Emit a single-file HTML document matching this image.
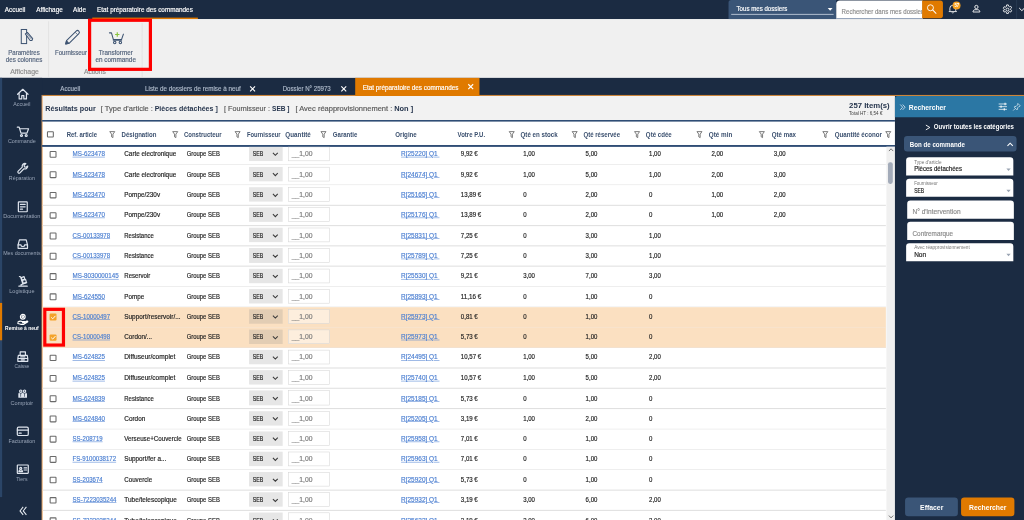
<!DOCTYPE html>
<html lang="fr"><head><meta charset="utf-8"><title>Etat préparatoire des commandes</title>
<style>
html,body{margin:0;padding:0;background:#1b2b42;}
body{width:1024px;height:520px;overflow:hidden;position:relative;font-family:"Liberation Sans",sans-serif;}
#app{position:absolute;left:0;top:0;width:1920px;height:975px;transform:scale(0.5333333);transform-origin:0 0;overflow:hidden;background:#fff;filter:contrast(1);}
#app div,#app svg{position:absolute;box-sizing:border-box;}
#app svg{overflow:visible;}
.t{white-space:nowrap;-webkit-text-stroke:0.3px;}
.t.h{-webkit-text-stroke:0;}
.u{text-decoration:underline;}
</style></head>
<body>
<div id="app">
<div style="left:0px;top:0px;width:1920px;height:36px;background:#1b2b42;"></div>
<div class="t" style="top:12.0px;font-size:12px;line-height:15.6px;color:#fff;transform:scaleX(0.9936);transform-origin:0 50%;left:8.91px;">Accueil</div>
<div class="t" style="top:12.0px;font-size:12px;line-height:15.6px;color:#fff;transform:scaleX(0.9972);transform-origin:0 50%;left:67.5px;">Affichage</div>
<div class="t" style="top:12.0px;font-size:12px;line-height:15.6px;color:#fff;transform:scaleX(1.0145);transform-origin:0 50%;left:137.34px;">Aide</div>
<div class="t" style="top:12.0px;font-size:12px;line-height:15.6px;color:#fff;transform:scaleX(0.9932);transform-origin:0 50%;left:181.88px;">Etat préparatoire des commandes</div>
<div style="left:172.5px;top:32.5px;width:198.75px;height:3.5px;background:#e07a00;"></div>
<div style="left:1366px;top:0px;width:202px;height:36px;background:#3a5577;border-radius:5px 0 0 0;"></div>
<div class="t" style="top:8.6px;font-size:12px;line-height:15.6px;color:#fff;transform:scaleX(0.9576);transform-origin:0 50%;left:1381.41px;">Tous mes dossiers</div>
<div style="left:1371px;top:26px;width:192px;height:1.6px;background:#a9b7ca;"></div>
<svg style="left:1552px;top:14.5px;" width="9" height="5" viewBox="0 0 9 5"><path d="M0 0h9L4.5 5z" fill="#fff"/></svg>
<div style="left:1567.5px;top:1px;width:162px;height:33.5px;background:#fff;border-radius:7px 0 0 0;"></div>
<div style="left:1567.5px;top:33.5px;width:162px;height:2.5px;background:#8fa0b8;"></div>
<div style="left:1567.5px;top:1px;width:161.5px;height:33px;overflow:hidden">
<div class="t" style="top:14.15px;font-size:12px;line-height:15.6px;color:#8c8c8c;transform:scaleX(0.9572);transform-origin:0 50%;left:10.779999999999973px;">Rechercher dans mes dossiers</div>
</div>
<div style="left:1729px;top:1.2px;width:39px;height:33px;background:#e07a00;border-radius:0 5px 5px 0;"></div>
<svg style="left:1735px;top:5px;" width="24" height="24" viewBox="0 0 24 24"><circle cx="9.600" cy="9.600" r="5.600" fill="none" stroke="#fff" stroke-width="1.700"/><path d="M13.700 13.700L20 20" stroke="#fff" stroke-width="1.900" stroke-linecap="round"/></svg>
<svg style="left:1778px;top:7px;" width="17" height="18" viewBox="0 0 17 18"><path d="M3 13.200V8.500a5.500 5.500 0 0 1 11 0v4.700l1.500 1.500h-14z" fill="none" stroke="#fff" stroke-width="1.600" stroke-linejoin="round"/><path d="M6.800 16.200a1.800 1.800 0 0 0 3.400 0" fill="none" stroke="#fff" stroke-width="1.500"/></svg>
<div style="left:1786px;top:3px;width:15px;height:15px;background:#f5a020;border-radius:50%;"></div>
<div class="t b h" style="top:4.95px;font-size:8.5px;line-height:11.1px;color:#fff;font-weight:700;transform:scaleX(0.95);transform-origin:50% 50%;left:1493.5px;width:600px;text-align:center;"><span class="m">57</span></div>
<svg style="left:1822.5px;top:9px;" width="15.5" height="15" viewBox="0 0 18 17"><circle cx="9" cy="4.600" r="3.600" fill="none" stroke="#fff" stroke-width="1.900"/><path d="M1.500 15.500c0-3 2-5 4.500-5h6c2.500 0 4.500 2 4.500 5z" fill="none" stroke="#fff" stroke-width="1.900" stroke-linejoin="round"/></svg>
<svg style="left:1879px;top:8px;" width="20" height="20" viewBox="0 0 20 20"><g fill="none" stroke="#fff" stroke-width="1.6"><circle cx="10" cy="10" r="2.800"/><path d="M8.4 1.200h3.200l.5 2.400 1.800 1 2.300-.8 1.600 2.800-1.800 1.600v2l1.800 1.600-1.600 2.800-2.300-.8-1.800 1-.5 2.400H8.400l-.5-2.400-1.800-1-2.300.8-1.600-2.800L4 11V9L2.200 7.400l1.600-2.800 2.300.8 1.800-1z" stroke-linejoin="round"/></g></svg>
<div style="left:1905.5px;top:0px;width:1.2px;height:36px;background:#33465f;"></div>
<svg style="left:1910px;top:13.5px;" width="11" height="7" viewBox="0 0 11 7"><path d="M1 1l5 5 5-5" fill="none" stroke="#fff" stroke-width="1.8"/></svg>
<div style="left:0px;top:36px;width:1920px;height:110px;background:#f0f0f0;"></div>
<div style="left:90.5px;top:40px;width:1px;height:104px;background:#d6d6d6;"></div>
<div style="left:265.5px;top:40px;width:0;height:104px;border-left:1.5px dotted #c4c4c4"></div>
<svg style="left:38px;top:53px;" width="26" height="31" viewBox="0 0 26 31"><g fill="none" stroke="#3e5472" stroke-width="1.9"><rect x="1.900" y="2.300" width="10" height="26.400"/><path d="M9.500 10.500l3.800-2.700 10 11.500-1.200 3.400-3.600.3z" fill="#f0f0f0" stroke-linejoin="round"/><path d="M11.400 9.200l10 11.500" stroke-width="1.200"/></g></svg>
<div class="t b" style="top:91.8px;font-size:12px;line-height:15.6px;color:#52627b;transform:scaleX(0.9521);transform-origin:50% 50%;left:-255.5px;width:600px;text-align:center;"><span class="m">Paramètres</span></div>
<div class="t b" style="top:105.8px;font-size:12px;line-height:15.6px;color:#52627b;transform:scaleX(0.9678);transform-origin:50% 50%;left:-255.5px;width:600px;text-align:center;"><span class="m">des colonnes</span></div>
<div class="t b" style="top:127.6px;font-size:12px;line-height:15.6px;color:#8d8d8d;transform:scaleX(1.0819);transform-origin:50% 50%;left:-254.3px;width:600px;text-align:center;"><span class="m">Affichage</span></div>
<svg style="left:121px;top:55px;" width="30" height="30" viewBox="0 0 30 30"><g fill="none" stroke="#3e5472" stroke-width="1.900" stroke-linejoin="round"><path d="M2.200 27.500l1.500-6.500L21.800 3.200a3.600 3.600 0 0 1 5 0a3.600 3.600 0 0 1 0 5L9 26z"/><path d="M20 5.500l4.500 4.500" stroke-width="1.300"/><path d="M2.200 27.500l5.800-1.300-4.300-4.400z" fill="#3e5472"/></g></svg>
<div class="t" style="top:91.8px;font-size:12px;line-height:15.6px;color:#52627b;transform:scaleX(0.947);transform-origin:0 50%;left:103.12px;">Fournisseur</div>
<svg style="left:204px;top:58px;" width="30" height="28" viewBox="0 0 30 28"><g fill="none" stroke="#3e5472" stroke-width="2" stroke-linejoin="round" stroke-linecap="round"><path d="M1.200 3.600h3.800l3.600 12.600h15.200L27.400 6"/><path d="M8.600 17.200h15.200" stroke-width="2.600"/><circle cx="11.100" cy="21.600" r="2.300"/><circle cx="21.700" cy="21.600" r="2.300"/></g><path d="M15.900 2.600v8.200M11.800 6.700h8.200" stroke="#8ac53f" stroke-width="2.200" fill="none"/></svg>
<div class="t b" style="top:91.8px;font-size:12px;line-height:15.6px;color:#52627b;transform:scaleX(0.9822);transform-origin:50% 50%;left:-83.5px;width:600px;text-align:center;"><span class="m">Transformer</span></div>
<div class="t b" style="top:105.8px;font-size:12px;line-height:15.6px;color:#52627b;transform:scaleX(0.9986);transform-origin:50% 50%;left:-83.5px;width:600px;text-align:center;"><span class="m">en commande</span></div>
<div class="t b" style="top:127.6px;font-size:12px;line-height:15.6px;color:#8d8d8d;transform:scaleX(1.048);transform-origin:50% 50%;left:-122px;width:600px;text-align:center;"><span class="m">Actions</span></div>
<div style="left:165px;top:34.7px;width:119.5px;height:98.3px;border:6.3px solid #fe0000;"></div>
<div style="left:0px;top:146px;width:1920px;height:34px;background:#1b2b42;"></div>
<div style="left:80px;top:178.3px;width:1840px;height:1.7px;background:#cc853a;"></div>
<div class="t" style="top:159.4px;font-size:12px;line-height:15.6px;color:#aebaca;transform:scaleX(0.9693);transform-origin:0 50%;left:112.5px;">Accueil</div>
<div class="t" style="top:159.4px;font-size:12px;line-height:15.6px;color:#aebaca;transform:scaleX(0.9808);transform-origin:0 50%;left:271.69px;">Liste de dossiers de remise à neuf</div>
<div class="t" style="top:159.4px;font-size:12px;line-height:15.6px;color:#aebaca;transform:scaleX(0.9576);transform-origin:0 50%;left:530.44px;">Dossier N° 25973</div>
<svg style="left:469.02px;top:161.8px;" width="9.2" height="9.2" viewBox="0 0 9.2 9.2"><path d="M0 0L9.2 9.2M9.2 0L0 9.2" stroke="#fff" stroke-width="2.1" fill="none"/></svg>
<svg style="left:640.02px;top:161.8px;" width="9.2" height="9.2" viewBox="0 0 9.2 9.2"><path d="M0 0L9.2 9.2M9.2 0L0 9.2" stroke="#fff" stroke-width="2.1" fill="none"/></svg>
<div style="left:666.38px;top:146px;width:232.88px;height:33.5px;background:#e07a00;"></div>
<div class="t" style="top:156.7px;font-size:12px;line-height:15.6px;color:#fff;transform:scaleX(0.9932);transform-origin:0 50%;left:680.44px;">Etat préparatoire des commandes</div>
<svg style="left:878.34px;top:158.4px;" width="9.2" height="9.2" viewBox="0 0 9.2 9.2"><path d="M0 0L9.2 9.2M9.2 0L0 9.2" stroke="#fff" stroke-width="2.1" fill="none"/></svg>
<div style="left:0px;top:146px;width:79px;height:829px;background:#1b2b42;"></div>
<div style="left:0px;top:146px;width:3.5px;height:785.5px;background:#2b4567;"></div>
<div style="left:0px;top:568px;width:3.6px;height:70px;background:#e07a00;"></div>
<svg style="left:30.549999999999997px;top:164.95px;" width="23.5" height="23.5" viewBox="0 0 24 24"><g fill="none" stroke="#dfe5ee" stroke-width="2.3" stroke-linejoin="round" stroke-linecap="round"><path d="M2 12L12 2.500 22 12M5 10v11h5v-6.500h4V21h5V10" /></g></svg>
<div class="t b h" style="top:187.9px;font-size:10.3px;line-height:13.4px;color:#99a5b8;transform:scaleX(0.9656);transform-origin:50% 50%;left:-259px;width:600px;text-align:center;"><span class="m">Accueil</span></div>
<svg style="left:30.549999999999997px;top:235.20999999999998px;" width="23.5" height="23.5" viewBox="0 0 24 24"><g fill="none" stroke="#dfe5ee" stroke-width="2.3" stroke-linejoin="round" stroke-linecap="round"><path d="M1.500 3.500h3.500l3.500 11.500h11.500l3-8.500h-16.500"/><circle cx="9.500" cy="19.500" r="1.900"/><circle cx="18.500" cy="19.500" r="1.900"/></g></svg>
<div class="t b h" style="top:258.16px;font-size:10.3px;line-height:13.4px;color:#99a5b8;transform:scaleX(0.9826);transform-origin:50% 50%;left:-259px;width:600px;text-align:center;"><span class="m">Commande</span></div>
<svg style="left:30.549999999999997px;top:305.47px;" width="23.5" height="23.5" viewBox="0 0 24 24"><g fill="none" stroke="#dfe5ee" stroke-width="2.3" stroke-linejoin="round" stroke-linecap="round"><path d="M21.500 6.500a5.500 5.500 0 0 1-7.300 5.200L6.500 19.500a2.300 2.300 0 0 1-3.300-3.300L11 8.500a5.500 5.500 0 0 1 6.800-6.800l-3.300 3.300.7 3 3 .7z"/></g></svg>
<div class="t b h" style="top:328.42px;font-size:10.3px;line-height:13.4px;color:#99a5b8;transform:scaleX(0.9677);transform-origin:50% 50%;left:-259px;width:600px;text-align:center;"><span class="m">Réparation</span></div>
<svg style="left:30.549999999999997px;top:375.73px;" width="23.5" height="23.5" viewBox="0 0 24 24"><g fill="none" stroke="#dfe5ee" stroke-width="2.3" stroke-linejoin="round" stroke-linecap="round"><rect x="3.500" y="2.500" width="17" height="19" rx="1"/><path d="M7.500 7.500h9M7.500 12h9M7.500 16.500h4"/></g></svg>
<div class="t b h" style="top:398.68px;font-size:10.3px;line-height:13.4px;color:#99a5b8;transform:scaleX(1.0042);transform-origin:50% 50%;left:-259px;width:600px;text-align:center;"><span class="m">Documentation</span></div>
<svg style="left:30.549999999999997px;top:445.99px;" width="23.5" height="23.5" viewBox="0 0 24 24"><g fill="none" stroke="#dfe5ee" stroke-width="2.3" stroke-linejoin="round" stroke-linecap="round"><path d="M3 13.500l2.500-9.500h13l2.500 9.500v6.500h-18z"/><path d="M3 13.500h5.500c0 2 1.500 3 3.500 3s3.500-1 3.500-3H21"/></g></svg>
<div class="t b h" style="top:468.94px;font-size:10.3px;line-height:13.4px;color:#99a5b8;transform:scaleX(0.9647);transform-origin:50% 50%;left:-259px;width:600px;text-align:center;"><span class="m">Mes documents</span></div>
<svg style="left:30.549999999999997px;top:516.25px;" width="23.5" height="23.5" viewBox="0 0 24 24"><g fill="none" stroke="#dfe5ee" stroke-width="2.3" stroke-linejoin="round" stroke-linecap="round"><path d="M5.500 2.500l2.300.800 4.200 13.200"/><rect x="9.800" y="3.500" width="5.500" height="5" transform="rotate(-17 12.500 6)"/><rect x="11.800" y="9" width="6.500" height="5.800" transform="rotate(-17 15 12)"/><path d="M4.500 21h16M8.500 18.500l4-2 7-2"/></g></svg>
<div class="t b h" style="top:539.2px;font-size:10.3px;line-height:13.4px;color:#99a5b8;transform:scaleX(1.0063);transform-origin:50% 50%;left:-259px;width:600px;text-align:center;"><span class="m">Logistique</span></div>
<svg style="left:30.549999999999997px;top:586.51px;" width="23.5" height="23.5" viewBox="0 0 24 24"><g fill="none" stroke="#fff" stroke-width="2.3" stroke-linejoin="round" stroke-linecap="round"><circle cx="12" cy="7" r="4.500"/><circle cx="12" cy="7" r="1.500"/><path d="M2.500 17.500c3-2.500 6-2.500 9-1h4c1.500 0 1.500 2 0 2h-4M15 17.500l5-2c1.500-.5 2 1 1 1.800l-7 4.200H8l-5.500-1.500"/></g></svg>
<div class="t b h" style="top:609.46px;font-size:10.3px;line-height:13.4px;color:#fff;font-weight:700;transform:scaleX(0.9022);transform-origin:50% 50%;left:-259px;width:600px;text-align:center;"><span class="m">Remise à neuf</span></div>
<svg style="left:30.549999999999997px;top:656.77px;" width="23.5" height="23.5" viewBox="0 0 24 24"><g fill="none" stroke="#dfe5ee" stroke-width="2.3" stroke-linejoin="round" stroke-linecap="round"><path d="M7 9V3h10v6M3.500 9.500h17l1 6h-19zM2.500 15.500h19v5.500h-19zM8 12.500h8M9 18h6"/></g></svg>
<div class="t b h" style="top:679.72px;font-size:10.3px;line-height:13.4px;color:#99a5b8;transform:scaleX(0.8884);transform-origin:50% 50%;left:-259px;width:600px;text-align:center;"><span class="m">Caisse</span></div>
<svg style="left:32.8px;top:729.28px;" width="19" height="19" viewBox="0 0 24 24"><g fill="none" stroke="#dfe5ee" stroke-width="2.6" stroke-linejoin="round" stroke-linecap="round"><circle cx="7.500" cy="5.500" r="2.800"/><circle cx="16.500" cy="5.500" r="2.800"/><path d="M3 20v-7.500c0-2 1.500-3 4.500-3s4.500 1 4.500 3V20zM12 20v-7.500c0-2 1.500-3 4.500-3s4.500 1 4.500 3V20zM5.500 13v7M9.500 13v7M14.500 13v7M18.500 13v7"/></g></svg>
<div class="t b h" style="top:749.98px;font-size:10.3px;line-height:13.4px;color:#99a5b8;transform:scaleX(1.0174);transform-origin:50% 50%;left:-259px;width:600px;text-align:center;"><span class="m">Comptoir</span></div>
<svg style="left:30.549999999999997px;top:797.29px;" width="23.5" height="23.5" viewBox="0 0 24 24"><g fill="none" stroke="#dfe5ee" stroke-width="2.3" stroke-linejoin="round" stroke-linecap="round"><rect x="1.500" y="4" width="21" height="16" rx="2.500"/><path d="M1.500 9.500h21M5 15.500h4"/></g></svg>
<div class="t b h" style="top:820.24px;font-size:10.3px;line-height:13.4px;color:#99a5b8;transform:scaleX(0.9805);transform-origin:50% 50%;left:-259px;width:600px;text-align:center;"><span class="m">Facturation</span></div>
<svg style="left:30.549999999999997px;top:867.55px;" width="23.5" height="23.5" viewBox="0 0 24 24"><g fill="none" stroke="#dfe5ee" stroke-width="2.3" stroke-linejoin="round" stroke-linecap="round"><rect x="1.500" y="4" width="21" height="16" rx="1"/><circle cx="8" cy="10.500" r="2"/><path d="M4.500 16.500c0-2 1.500-3 3.500-3s3.500 1 3.500 3zM14.500 9.500h5M14.500 13.500h5"/></g></svg>
<div class="t b h" style="top:890.5px;font-size:10.3px;line-height:13.4px;color:#99a5b8;transform:scaleX(0.9342);transform-origin:50% 50%;left:-259px;width:600px;text-align:center;"><span class="m">Tiers</span></div>
<svg style="left:35.5px;top:948.5px;" width="15" height="18" viewBox="0 0 15 18"><path d="M7.500 1.500L1.500 9l6 7.500M13.500 1.500L7.500 9l6 7.500" fill="none" stroke="#e8edf3" stroke-width="1.900"/></svg>
<div style="left:78.6px;top:180px;width:1599.4px;height:795px;background:#fff;"></div>
<div style="left:78.6px;top:180px;width:1599.4px;height:45.5px;background:#f2f2f2;"></div>
<div style="left:78.19999999999999px;top:178.3px;width:2px;height:797px;background:#e6a86a;"></div>
<div style="left:78.6px;top:225.2px;width:1599.4px;height:3.2px;background:#2f4d75;"></div>
<div class="t h" style="top:194.3px;font-size:14px;line-height:18.2px;color:#26354d;font-weight:700;transform:scaleX(0.9641);transform-origin:0 50%;left:84.84px;">Résultats pour</div>
<div class="t" style="top:194.3px;font-size:14px;line-height:18.2px;color:#585858;transform:scaleX(1.0034);transform-origin:0 50%;left:189.38px;">[ Type d'article : </div>
<div class="t h" style="top:194.3px;font-size:14px;line-height:18.2px;color:#26354d;font-weight:700;transform:scaleX(0.9442);transform-origin:0 50%;left:290.44px;">Pièces détachées ]</div>
<div class="t" style="top:194.3px;font-size:14px;line-height:18.2px;color:#585858;transform:scaleX(0.9628);transform-origin:0 50%;left:420.47px;">[ Fournisseur : </div>
<div class="t h" style="top:194.3px;font-size:14px;line-height:18.2px;color:#26354d;font-weight:700;transform:scaleX(0.8786);transform-origin:0 50%;left:510.0px;">SEB ]</div>
<div class="t" style="top:194.3px;font-size:14px;line-height:18.2px;color:#585858;transform:scaleX(1.0067);transform-origin:0 50%;left:553.88px;">[ Avec réapprovisionnement : </div>
<div class="t h" style="top:194.3px;font-size:14px;line-height:18.2px;color:#26354d;font-weight:700;transform:scaleX(0.9959);transform-origin:0 50%;left:738.75px;">Non ]</div>
<div class="t h" style="top:189.3px;font-size:14.3px;line-height:18.6px;color:#26354d;font-weight:700;transform:scaleX(1.019);transform-origin:0 50%;left:1591.69px;">257 Item(s)</div>
<div class="t h" style="top:205.95px;font-size:9.3px;line-height:12.1px;color:#3c3c3c;transform:scaleX(0.9202);transform-origin:0 50%;left:1592.34px;">Total HT : 6,54 €</div>
<div style="left:87.94px;top:245.81px;width:13.5px;height:12.7px;background:#fff;border:2.100px solid #6a6a6a;border-radius:2px;"></div>
<div class="t h" style="top:244.6px;font-size:12px;line-height:15.6px;color:#3a4f6e;font-weight:700;transform:scaleX(0.9275);transform-origin:0 50%;left:125.44px;">Ref. article</div>
<div class="t h" style="top:244.6px;font-size:12px;line-height:15.6px;color:#3a4f6e;font-weight:700;transform:scaleX(0.9489);transform-origin:0 50%;left:227.81px;">Désignation</div>
<div class="t h" style="top:244.6px;font-size:12px;line-height:15.6px;color:#3a4f6e;font-weight:700;transform:scaleX(0.9332);transform-origin:0 50%;left:345.0px;">Constructeur</div>
<div class="t h" style="top:244.6px;font-size:12px;line-height:15.6px;color:#3a4f6e;font-weight:700;transform:scaleX(0.9056);transform-origin:0 50%;left:462.66px;">Fournisseur</div>
<div class="t h" style="top:244.6px;font-size:12px;line-height:15.6px;color:#3a4f6e;font-weight:700;transform:scaleX(0.9823);transform-origin:0 50%;left:534.84px;">Quantité</div>
<div class="t h" style="top:244.6px;font-size:12px;line-height:15.6px;color:#3a4f6e;font-weight:700;transform:scaleX(0.9473);transform-origin:0 50%;left:624.19px;">Garantie</div>
<div class="t h" style="top:244.6px;font-size:12px;line-height:15.6px;color:#3a4f6e;font-weight:700;transform:scaleX(0.9639);transform-origin:0 50%;left:741.38px;">Origine</div>
<div class="t h" style="top:244.6px;font-size:12px;line-height:15.6px;color:#3a4f6e;font-weight:700;transform:scaleX(0.9388);transform-origin:0 50%;left:858.38px;">Votre P.U.</div>
<div class="t h" style="top:244.6px;font-size:12px;line-height:15.6px;color:#3a4f6e;font-weight:700;transform:scaleX(0.9657);transform-origin:0 50%;left:975.94px;">Qté en stock</div>
<div class="t h" style="top:244.6px;font-size:12px;line-height:15.6px;color:#3a4f6e;font-weight:700;transform:scaleX(0.9434);transform-origin:0 50%;left:1093.88px;">Qté réservée</div>
<div class="t h" style="top:244.6px;font-size:12px;line-height:15.6px;color:#3a4f6e;font-weight:700;transform:scaleX(0.956);transform-origin:0 50%;left:1211.25px;">Qté cdée</div>
<div class="t h" style="top:244.6px;font-size:12px;line-height:15.6px;color:#3a4f6e;font-weight:700;transform:scaleX(0.9863);transform-origin:0 50%;left:1329.38px;">Qté min</div>
<div class="t h" style="top:244.6px;font-size:12px;line-height:15.6px;color:#3a4f6e;font-weight:700;transform:scaleX(0.9601);transform-origin:0 50%;left:1446.56px;">Qté max</div>
<div class="t h" style="top:244.6px;font-size:12px;line-height:15.6px;color:#3a4f6e;font-weight:700;transform:scaleX(0.9628);transform-origin:0 50%;left:1564.69px;">Quantité éconor</div>
<svg style="left:204.88px;top:245.9px;" width="11" height="13" viewBox="0 0 11 13"><path d="M0.800 0.800h9.400L6.800 5.500v6.500l-2.600-1.500v-5z" fill="none" stroke="#5c5c5c" stroke-width="1.500" stroke-linejoin="round"/></svg>
<svg style="left:322.62px;top:245.9px;" width="11" height="13" viewBox="0 0 11 13"><path d="M0.800 0.800h9.400L6.800 5.500v6.500l-2.600-1.500v-5z" fill="none" stroke="#5c5c5c" stroke-width="1.500" stroke-linejoin="round"/></svg>
<svg style="left:440.0px;top:245.9px;" width="11" height="13" viewBox="0 0 11 13"><path d="M0.800 0.800h9.400L6.800 5.500v6.500l-2.600-1.500v-5z" fill="none" stroke="#5c5c5c" stroke-width="1.500" stroke-linejoin="round"/></svg>
<svg style="left:600.5px;top:245.9px;" width="11" height="13" viewBox="0 0 11 13"><path d="M0.800 0.800h9.400L6.800 5.500v6.500l-2.600-1.500v-5z" fill="none" stroke="#5c5c5c" stroke-width="1.500" stroke-linejoin="round"/></svg>
<svg style="left:953.75px;top:245.9px;" width="11" height="13" viewBox="0 0 11 13"><path d="M0.800 0.800h9.400L6.800 5.500v6.500l-2.600-1.500v-5z" fill="none" stroke="#5c5c5c" stroke-width="1.500" stroke-linejoin="round"/></svg>
<svg style="left:1071.5px;top:245.9px;" width="11" height="13" viewBox="0 0 11 13"><path d="M0.800 0.800h9.400L6.800 5.500v6.500l-2.600-1.500v-5z" fill="none" stroke="#5c5c5c" stroke-width="1.500" stroke-linejoin="round"/></svg>
<svg style="left:1188.88px;top:245.9px;" width="11" height="13" viewBox="0 0 11 13"><path d="M0.800 0.800h9.400L6.800 5.500v6.500l-2.600-1.500v-5z" fill="none" stroke="#5c5c5c" stroke-width="1.500" stroke-linejoin="round"/></svg>
<svg style="left:1306.06px;top:245.9px;" width="11" height="13" viewBox="0 0 11 13"><path d="M0.800 0.800h9.400L6.800 5.500v6.500l-2.600-1.500v-5z" fill="none" stroke="#5c5c5c" stroke-width="1.500" stroke-linejoin="round"/></svg>
<svg style="left:1423.25px;top:245.9px;" width="11" height="13" viewBox="0 0 11 13"><path d="M0.800 0.800h9.400L6.800 5.500v6.500l-2.600-1.500v-5z" fill="none" stroke="#5c5c5c" stroke-width="1.500" stroke-linejoin="round"/></svg>
<svg style="left:1542.12px;top:245.9px;" width="11" height="13" viewBox="0 0 11 13"><path d="M0.800 0.800h9.400L6.800 5.500v6.500l-2.600-1.500v-5z" fill="none" stroke="#5c5c5c" stroke-width="1.500" stroke-linejoin="round"/></svg>
<svg style="left:1659.5px;top:245.9px;" width="11" height="13" viewBox="0 0 11 13"><path d="M0.800 0.800h9.400L6.800 5.500v6.500l-2.600-1.500v-5z" fill="none" stroke="#5c5c5c" stroke-width="1.500" stroke-linejoin="round"/></svg>
<div style="left:78.6px;top:271.8px;width:1599.4px;height:3.2px;background:#2f4d75;"></div>
<div style="left:79.6px;top:307.73999999999995px;width:1581.9px;height:1.6px;background:#e0e0e0;"></div>
<div style="left:92.62px;top:283.29999999999995px;width:13.5px;height:12.7px;background:#fff;border:2.100px solid #6a6a6a;border-radius:2px;"></div>
<div class="t" style="top:282.0px;font-size:12px;line-height:15.6px;color:#4b7fd1;transform:scaleX(0.9793);transform-origin:0 50%;left:135.94px;text-decoration:underline;">MS-623478</div>
<div class="t" style="top:282.0px;font-size:12px;line-height:15.6px;color:#222;transform:scaleX(0.9934);transform-origin:0 50%;left:232.5px;">Carte electronique</div>
<div class="t" style="top:282.0px;font-size:12px;line-height:15.6px;color:#222;transform:scaleX(0.9226);transform-origin:0 50%;left:350.16px;">Groupe SEB</div>
<div style="left:467.34px;top:274.7px;width:62.2px;height:27.2px;background:#e6e6e6;"></div>
<div class="t" style="top:282.0px;font-size:12px;line-height:15.6px;color:#222;transform:scaleX(0.8199);transform-origin:0 50%;left:473.91px;">SEB</div>
<svg style="left:510.75px;top:286.29999999999995px;" width="10.5" height="6.5" viewBox="0 0 10.5 6.5"><path d="M0.700 0.700l4.550 4.600 4.550-4.600" fill="none" stroke="#3a3a3a" stroke-width="2"/></svg>
<div style="left:540.0px;top:274.7px;width:77.8px;height:27.2px;background:#fff;border:1.200px solid #d4d4d4;"></div>
<div class="t" style="top:282.0px;font-size:12px;line-height:15.6px;color:#7c7c7c;transform:scaleX(1.0626);transform-origin:0 50%;left:546.75px;">__1,00</div>
<div class="t" style="top:282.0px;font-size:12px;line-height:15.6px;color:#4b7fd1;transform:scaleX(1.0085);transform-origin:0 50%;left:751.88px;text-decoration:underline;">R[25220] Q1&nbsp;</div>
<div class="t" style="top:282.0px;font-size:12px;line-height:15.6px;color:#222;transform:scaleX(0.9519);transform-origin:0 50%;left:864.19px;">9,92 €</div>
<div class="t" style="top:282.0px;font-size:12px;line-height:15.6px;color:#222;transform:scaleX(0.9422);transform-origin:0 50%;left:981.38px;">1,00</div>
<div class="t" style="top:282.0px;font-size:12px;line-height:15.6px;color:#222;transform:scaleX(0.9422);transform-origin:0 50%;left:1098.38px;">5,00</div>
<div class="t" style="top:282.0px;font-size:12px;line-height:15.6px;color:#222;transform:scaleX(0.9422);transform-origin:0 50%;left:1216.5px;">1,00</div>
<div class="t" style="top:282.0px;font-size:12px;line-height:15.6px;color:#222;transform:scaleX(0.9422);transform-origin:0 50%;left:1333.69px;">2,00</div>
<div class="t" style="top:282.0px;font-size:12px;line-height:15.6px;color:#222;transform:scaleX(0.9422);transform-origin:0 50%;left:1451.25px;">3,00</div>
<div style="left:79.6px;top:345.87999999999994px;width:1581.9px;height:1.6px;background:#e0e0e0;"></div>
<div style="left:92.62px;top:321.43999999999994px;width:13.5px;height:12.7px;background:#fff;border:2.100px solid #6a6a6a;border-radius:2px;"></div>
<div class="t" style="top:320.14px;font-size:12px;line-height:15.6px;color:#4b7fd1;transform:scaleX(0.9793);transform-origin:0 50%;left:135.94px;text-decoration:underline;">MS-623478</div>
<div class="t" style="top:320.14px;font-size:12px;line-height:15.6px;color:#222;transform:scaleX(0.9934);transform-origin:0 50%;left:232.5px;">Carte electronique</div>
<div class="t" style="top:320.14px;font-size:12px;line-height:15.6px;color:#222;transform:scaleX(0.9226);transform-origin:0 50%;left:350.16px;">Groupe SEB</div>
<div style="left:467.34px;top:312.84px;width:62.2px;height:27.2px;background:#e6e6e6;"></div>
<div class="t" style="top:320.14px;font-size:12px;line-height:15.6px;color:#222;transform:scaleX(0.8199);transform-origin:0 50%;left:473.91px;">SEB</div>
<svg style="left:510.75px;top:324.43999999999994px;" width="10.5" height="6.5" viewBox="0 0 10.5 6.5"><path d="M0.700 0.700l4.550 4.600 4.550-4.600" fill="none" stroke="#3a3a3a" stroke-width="2"/></svg>
<div style="left:540.0px;top:312.84px;width:77.8px;height:27.2px;background:#fff;border:1.200px solid #d4d4d4;"></div>
<div class="t" style="top:320.14px;font-size:12px;line-height:15.6px;color:#7c7c7c;transform:scaleX(1.0626);transform-origin:0 50%;left:546.75px;">__1,00</div>
<div class="t" style="top:320.14px;font-size:12px;line-height:15.6px;color:#4b7fd1;transform:scaleX(1.0085);transform-origin:0 50%;left:751.88px;text-decoration:underline;">R[24674] Q1&nbsp;</div>
<div class="t" style="top:320.14px;font-size:12px;line-height:15.6px;color:#222;transform:scaleX(0.9519);transform-origin:0 50%;left:864.19px;">9,92 €</div>
<div class="t" style="top:320.14px;font-size:12px;line-height:15.6px;color:#222;transform:scaleX(0.9422);transform-origin:0 50%;left:981.38px;">1,00</div>
<div class="t" style="top:320.14px;font-size:12px;line-height:15.6px;color:#222;transform:scaleX(0.9422);transform-origin:0 50%;left:1098.38px;">5,00</div>
<div class="t" style="top:320.14px;font-size:12px;line-height:15.6px;color:#222;transform:scaleX(0.9422);transform-origin:0 50%;left:1216.5px;">1,00</div>
<div class="t" style="top:320.14px;font-size:12px;line-height:15.6px;color:#222;transform:scaleX(0.9422);transform-origin:0 50%;left:1333.69px;">2,00</div>
<div class="t" style="top:320.14px;font-size:12px;line-height:15.6px;color:#222;transform:scaleX(0.9422);transform-origin:0 50%;left:1451.25px;">3,00</div>
<div style="left:79.6px;top:384.0199999999999px;width:1581.9px;height:1.6px;background:#e0e0e0;"></div>
<div style="left:92.62px;top:359.5799999999999px;width:13.5px;height:12.7px;background:#fff;border:2.100px solid #6a6a6a;border-radius:2px;"></div>
<div class="t" style="top:358.28px;font-size:12px;line-height:15.6px;color:#4b7fd1;transform:scaleX(0.9793);transform-origin:0 50%;left:135.94px;text-decoration:underline;">MS-623470</div>
<div class="t" style="top:358.28px;font-size:12px;line-height:15.6px;color:#222;transform:scaleX(0.9975);transform-origin:0 50%;left:232.5px;">Pompe/230v</div>
<div class="t" style="top:358.28px;font-size:12px;line-height:15.6px;color:#222;transform:scaleX(0.9226);transform-origin:0 50%;left:350.16px;">Groupe SEB</div>
<div style="left:467.34px;top:350.97999999999996px;width:62.2px;height:27.2px;background:#e6e6e6;"></div>
<div class="t" style="top:358.28px;font-size:12px;line-height:15.6px;color:#222;transform:scaleX(0.8199);transform-origin:0 50%;left:473.91px;">SEB</div>
<svg style="left:510.75px;top:362.5799999999999px;" width="10.5" height="6.5" viewBox="0 0 10.5 6.5"><path d="M0.700 0.700l4.550 4.600 4.550-4.600" fill="none" stroke="#3a3a3a" stroke-width="2"/></svg>
<div style="left:540.0px;top:350.97999999999996px;width:77.8px;height:27.2px;background:#fff;border:1.200px solid #d4d4d4;"></div>
<div class="t" style="top:358.28px;font-size:12px;line-height:15.6px;color:#7c7c7c;transform:scaleX(1.0626);transform-origin:0 50%;left:546.75px;">__1,00</div>
<div class="t" style="top:358.28px;font-size:12px;line-height:15.6px;color:#4b7fd1;transform:scaleX(1.0085);transform-origin:0 50%;left:751.88px;text-decoration:underline;">R[25165] Q1&nbsp;</div>
<div class="t" style="top:358.28px;font-size:12px;line-height:15.6px;color:#222;transform:scaleX(0.9549);transform-origin:0 50%;left:864.19px;">13,89 €</div>
<div class="t" style="top:358.28px;font-size:12px;line-height:15.6px;color:#222;transform:scaleX(0.95);transform-origin:0 50%;left:981.38px;">0</div>
<div class="t" style="top:358.28px;font-size:12px;line-height:15.6px;color:#222;transform:scaleX(0.9422);transform-origin:0 50%;left:1098.38px;">2,00</div>
<div class="t" style="top:358.28px;font-size:12px;line-height:15.6px;color:#222;transform:scaleX(0.95);transform-origin:0 50%;left:1216.5px;">0</div>
<div class="t" style="top:358.28px;font-size:12px;line-height:15.6px;color:#222;transform:scaleX(0.9422);transform-origin:0 50%;left:1333.69px;">1,00</div>
<div class="t" style="top:358.28px;font-size:12px;line-height:15.6px;color:#222;transform:scaleX(0.9422);transform-origin:0 50%;left:1451.25px;">2,00</div>
<div style="left:79.6px;top:422.15999999999997px;width:1581.9px;height:1.6px;background:#e0e0e0;"></div>
<div style="left:92.62px;top:397.71999999999997px;width:13.5px;height:12.7px;background:#fff;border:2.100px solid #6a6a6a;border-radius:2px;"></div>
<div class="t" style="top:396.42px;font-size:12px;line-height:15.6px;color:#4b7fd1;transform:scaleX(0.9793);transform-origin:0 50%;left:135.94px;text-decoration:underline;">MS-623470</div>
<div class="t" style="top:396.42px;font-size:12px;line-height:15.6px;color:#222;transform:scaleX(0.9975);transform-origin:0 50%;left:232.5px;">Pompe/230v</div>
<div class="t" style="top:396.42px;font-size:12px;line-height:15.6px;color:#222;transform:scaleX(0.9226);transform-origin:0 50%;left:350.16px;">Groupe SEB</div>
<div style="left:467.34px;top:389.12px;width:62.2px;height:27.2px;background:#e6e6e6;"></div>
<div class="t" style="top:396.42px;font-size:12px;line-height:15.6px;color:#222;transform:scaleX(0.8199);transform-origin:0 50%;left:473.91px;">SEB</div>
<svg style="left:510.75px;top:400.71999999999997px;" width="10.5" height="6.5" viewBox="0 0 10.5 6.5"><path d="M0.700 0.700l4.550 4.600 4.550-4.600" fill="none" stroke="#3a3a3a" stroke-width="2"/></svg>
<div style="left:540.0px;top:389.12px;width:77.8px;height:27.2px;background:#fff;border:1.200px solid #d4d4d4;"></div>
<div class="t" style="top:396.42px;font-size:12px;line-height:15.6px;color:#7c7c7c;transform:scaleX(1.0626);transform-origin:0 50%;left:546.75px;">__1,00</div>
<div class="t" style="top:396.42px;font-size:12px;line-height:15.6px;color:#4b7fd1;transform:scaleX(1.0085);transform-origin:0 50%;left:751.88px;text-decoration:underline;">R[25176] Q1&nbsp;</div>
<div class="t" style="top:396.42px;font-size:12px;line-height:15.6px;color:#222;transform:scaleX(0.9549);transform-origin:0 50%;left:864.19px;">13,89 €</div>
<div class="t" style="top:396.42px;font-size:12px;line-height:15.6px;color:#222;transform:scaleX(0.95);transform-origin:0 50%;left:981.38px;">0</div>
<div class="t" style="top:396.42px;font-size:12px;line-height:15.6px;color:#222;transform:scaleX(0.9422);transform-origin:0 50%;left:1098.38px;">2,00</div>
<div class="t" style="top:396.42px;font-size:12px;line-height:15.6px;color:#222;transform:scaleX(0.95);transform-origin:0 50%;left:1216.5px;">0</div>
<div class="t" style="top:396.42px;font-size:12px;line-height:15.6px;color:#222;transform:scaleX(0.9422);transform-origin:0 50%;left:1333.69px;">1,00</div>
<div class="t" style="top:396.42px;font-size:12px;line-height:15.6px;color:#222;transform:scaleX(0.9422);transform-origin:0 50%;left:1451.25px;">2,00</div>
<div style="left:79.6px;top:460.29999999999995px;width:1581.9px;height:1.6px;background:#e0e0e0;"></div>
<div style="left:92.62px;top:435.85999999999996px;width:13.5px;height:12.7px;background:#fff;border:2.100px solid #6a6a6a;border-radius:2px;"></div>
<div class="t" style="top:434.56px;font-size:12px;line-height:15.6px;color:#4b7fd1;transform:scaleX(0.9499);transform-origin:0 50%;left:135.94px;text-decoration:underline;">CS-00133978</div>
<div class="t" style="top:434.56px;font-size:12px;line-height:15.6px;color:#222;transform:scaleX(0.9317);transform-origin:0 50%;left:232.5px;">Resistance</div>
<div class="t" style="top:434.56px;font-size:12px;line-height:15.6px;color:#222;transform:scaleX(0.9226);transform-origin:0 50%;left:350.16px;">Groupe SEB</div>
<div style="left:467.34px;top:427.26px;width:62.2px;height:27.2px;background:#e6e6e6;"></div>
<div class="t" style="top:434.56px;font-size:12px;line-height:15.6px;color:#222;transform:scaleX(0.8199);transform-origin:0 50%;left:473.91px;">SEB</div>
<svg style="left:510.75px;top:438.85999999999996px;" width="10.5" height="6.5" viewBox="0 0 10.5 6.5"><path d="M0.700 0.700l4.550 4.600 4.550-4.600" fill="none" stroke="#3a3a3a" stroke-width="2"/></svg>
<div style="left:540.0px;top:427.26px;width:77.8px;height:27.2px;background:#fff;border:1.200px solid #d4d4d4;"></div>
<div class="t" style="top:434.56px;font-size:12px;line-height:15.6px;color:#7c7c7c;transform:scaleX(1.0626);transform-origin:0 50%;left:546.75px;">__1,00</div>
<div class="t" style="top:434.56px;font-size:12px;line-height:15.6px;color:#4b7fd1;transform:scaleX(1.0085);transform-origin:0 50%;left:751.88px;text-decoration:underline;">R[25831] Q1&nbsp;</div>
<div class="t" style="top:434.56px;font-size:12px;line-height:15.6px;color:#222;transform:scaleX(0.9519);transform-origin:0 50%;left:864.19px;">7,25 €</div>
<div class="t" style="top:434.56px;font-size:12px;line-height:15.6px;color:#222;transform:scaleX(0.95);transform-origin:0 50%;left:981.38px;">0</div>
<div class="t" style="top:434.56px;font-size:12px;line-height:15.6px;color:#222;transform:scaleX(0.9422);transform-origin:0 50%;left:1098.38px;">3,00</div>
<div class="t" style="top:434.56px;font-size:12px;line-height:15.6px;color:#222;transform:scaleX(0.9422);transform-origin:0 50%;left:1216.5px;">1,00</div>
<div style="left:79.6px;top:498.43999999999994px;width:1581.9px;height:1.6px;background:#e0e0e0;"></div>
<div style="left:92.62px;top:473.99999999999994px;width:13.5px;height:12.7px;background:#fff;border:2.100px solid #6a6a6a;border-radius:2px;"></div>
<div class="t" style="top:472.7px;font-size:12px;line-height:15.6px;color:#4b7fd1;transform:scaleX(0.9499);transform-origin:0 50%;left:135.94px;text-decoration:underline;">CS-00133978</div>
<div class="t" style="top:472.7px;font-size:12px;line-height:15.6px;color:#222;transform:scaleX(0.9317);transform-origin:0 50%;left:232.5px;">Resistance</div>
<div class="t" style="top:472.7px;font-size:12px;line-height:15.6px;color:#222;transform:scaleX(0.9226);transform-origin:0 50%;left:350.16px;">Groupe SEB</div>
<div style="left:467.34px;top:465.4px;width:62.2px;height:27.2px;background:#e6e6e6;"></div>
<div class="t" style="top:472.7px;font-size:12px;line-height:15.6px;color:#222;transform:scaleX(0.8199);transform-origin:0 50%;left:473.91px;">SEB</div>
<svg style="left:510.75px;top:476.99999999999994px;" width="10.5" height="6.5" viewBox="0 0 10.5 6.5"><path d="M0.700 0.700l4.550 4.600 4.550-4.600" fill="none" stroke="#3a3a3a" stroke-width="2"/></svg>
<div style="left:540.0px;top:465.4px;width:77.8px;height:27.2px;background:#fff;border:1.200px solid #d4d4d4;"></div>
<div class="t" style="top:472.7px;font-size:12px;line-height:15.6px;color:#7c7c7c;transform:scaleX(1.0626);transform-origin:0 50%;left:546.75px;">__1,00</div>
<div class="t" style="top:472.7px;font-size:12px;line-height:15.6px;color:#4b7fd1;transform:scaleX(1.0085);transform-origin:0 50%;left:751.88px;text-decoration:underline;">R[25789] Q1&nbsp;</div>
<div class="t" style="top:472.7px;font-size:12px;line-height:15.6px;color:#222;transform:scaleX(0.9519);transform-origin:0 50%;left:864.19px;">7,25 €</div>
<div class="t" style="top:472.7px;font-size:12px;line-height:15.6px;color:#222;transform:scaleX(0.95);transform-origin:0 50%;left:981.38px;">0</div>
<div class="t" style="top:472.7px;font-size:12px;line-height:15.6px;color:#222;transform:scaleX(0.9422);transform-origin:0 50%;left:1098.38px;">3,00</div>
<div class="t" style="top:472.7px;font-size:12px;line-height:15.6px;color:#222;transform:scaleX(0.9422);transform-origin:0 50%;left:1216.5px;">1,00</div>
<div style="left:79.6px;top:536.58px;width:1581.9px;height:1.6px;background:#e0e0e0;"></div>
<div style="left:92.62px;top:512.14px;width:13.5px;height:12.7px;background:#fff;border:2.100px solid #6a6a6a;border-radius:2px;"></div>
<div class="t" style="top:510.84px;font-size:12px;line-height:15.6px;color:#4b7fd1;transform:scaleX(0.9764);transform-origin:0 50%;left:135.94px;text-decoration:underline;">MS-8030000145</div>
<div class="t" style="top:510.84px;font-size:12px;line-height:15.6px;color:#222;transform:scaleX(0.9511);transform-origin:0 50%;left:232.5px;">Reservoir</div>
<div class="t" style="top:510.84px;font-size:12px;line-height:15.6px;color:#222;transform:scaleX(0.9226);transform-origin:0 50%;left:350.16px;">Groupe SEB</div>
<div style="left:467.34px;top:503.54px;width:62.2px;height:27.2px;background:#e6e6e6;"></div>
<div class="t" style="top:510.84px;font-size:12px;line-height:15.6px;color:#222;transform:scaleX(0.8199);transform-origin:0 50%;left:473.91px;">SEB</div>
<svg style="left:510.75px;top:515.14px;" width="10.5" height="6.5" viewBox="0 0 10.5 6.5"><path d="M0.700 0.700l4.550 4.600 4.550-4.600" fill="none" stroke="#3a3a3a" stroke-width="2"/></svg>
<div style="left:540.0px;top:503.54px;width:77.8px;height:27.2px;background:#fff;border:1.200px solid #d4d4d4;"></div>
<div class="t" style="top:510.84px;font-size:12px;line-height:15.6px;color:#7c7c7c;transform:scaleX(1.0626);transform-origin:0 50%;left:546.75px;">__1,00</div>
<div class="t" style="top:510.84px;font-size:12px;line-height:15.6px;color:#4b7fd1;transform:scaleX(1.0085);transform-origin:0 50%;left:751.88px;text-decoration:underline;">R[25530] Q1&nbsp;</div>
<div class="t" style="top:510.84px;font-size:12px;line-height:15.6px;color:#222;transform:scaleX(0.9519);transform-origin:0 50%;left:864.19px;">9,21 €</div>
<div class="t" style="top:510.84px;font-size:12px;line-height:15.6px;color:#222;transform:scaleX(0.9422);transform-origin:0 50%;left:981.38px;">3,00</div>
<div class="t" style="top:510.84px;font-size:12px;line-height:15.6px;color:#222;transform:scaleX(0.9422);transform-origin:0 50%;left:1098.38px;">7,00</div>
<div class="t" style="top:510.84px;font-size:12px;line-height:15.6px;color:#222;transform:scaleX(0.9422);transform-origin:0 50%;left:1216.5px;">3,00</div>
<div style="left:79.6px;top:574.72px;width:1581.9px;height:1.6px;background:#e0e0e0;"></div>
<div style="left:92.62px;top:550.28px;width:13.5px;height:12.7px;background:#fff;border:2.100px solid #6a6a6a;border-radius:2px;"></div>
<div class="t" style="top:548.98px;font-size:12px;line-height:15.6px;color:#4b7fd1;transform:scaleX(0.9793);transform-origin:0 50%;left:135.94px;text-decoration:underline;">MS-624550</div>
<div class="t" style="top:548.98px;font-size:12px;line-height:15.6px;color:#222;transform:scaleX(0.9834);transform-origin:0 50%;left:232.5px;">Pompe</div>
<div class="t" style="top:548.98px;font-size:12px;line-height:15.6px;color:#222;transform:scaleX(0.9226);transform-origin:0 50%;left:350.16px;">Groupe SEB</div>
<div style="left:467.34px;top:541.68px;width:62.2px;height:27.2px;background:#e6e6e6;"></div>
<div class="t" style="top:548.98px;font-size:12px;line-height:15.6px;color:#222;transform:scaleX(0.8199);transform-origin:0 50%;left:473.91px;">SEB</div>
<svg style="left:510.75px;top:553.28px;" width="10.5" height="6.5" viewBox="0 0 10.5 6.5"><path d="M0.700 0.700l4.550 4.600 4.550-4.600" fill="none" stroke="#3a3a3a" stroke-width="2"/></svg>
<div style="left:540.0px;top:541.68px;width:77.8px;height:27.2px;background:#fff;border:1.200px solid #d4d4d4;"></div>
<div class="t" style="top:548.98px;font-size:12px;line-height:15.6px;color:#7c7c7c;transform:scaleX(1.0626);transform-origin:0 50%;left:546.75px;">__1,00</div>
<div class="t" style="top:548.98px;font-size:12px;line-height:15.6px;color:#4b7fd1;transform:scaleX(1.0085);transform-origin:0 50%;left:751.88px;text-decoration:underline;">R[25893] Q1&nbsp;</div>
<div class="t" style="top:548.98px;font-size:12px;line-height:15.6px;color:#222;transform:scaleX(0.9766);transform-origin:0 50%;left:864.19px;">11,16 €</div>
<div class="t" style="top:548.98px;font-size:12px;line-height:15.6px;color:#222;transform:scaleX(0.95);transform-origin:0 50%;left:981.38px;">0</div>
<div class="t" style="top:548.98px;font-size:12px;line-height:15.6px;color:#222;transform:scaleX(0.9422);transform-origin:0 50%;left:1098.38px;">1,00</div>
<div class="t" style="top:548.98px;font-size:12px;line-height:15.6px;color:#222;transform:scaleX(0.95);transform-origin:0 50%;left:1216.5px;">0</div>
<div style="left:79.6px;top:576.02px;width:1581.9px;height:38.14px;background:#fbe0c1;"></div>
<div style="left:79.6px;top:613.06px;width:1581.9px;height:1.2px;background:#eadccd;"></div>
<div style="left:92.62px;top:588.42px;width:13.5px;height:12.5px;background:#f4a32a;border-radius:2px;"></div>
<svg style="left:94.62px;top:590.92px;" width="10" height="8" viewBox="0 0 10 8"><path d="M1 4l2.800 2.800L9 1.200" fill="none" stroke="#fff" stroke-width="1.800"/></svg>
<div class="t" style="top:587.12px;font-size:12px;line-height:15.6px;color:#4b7fd1;transform:scaleX(0.9499);transform-origin:0 50%;left:135.94px;text-decoration:underline;">CS-10000497</div>
<div class="t" style="top:587.12px;font-size:12px;line-height:15.6px;color:#222;transform:scaleX(1.0016);transform-origin:0 50%;left:232.5px;">Support/reservoir/...</div>
<div class="t" style="top:587.12px;font-size:12px;line-height:15.6px;color:#222;transform:scaleX(0.9226);transform-origin:0 50%;left:350.16px;">Groupe SEB</div>
<div style="left:467.34px;top:579.8199999999999px;width:62.2px;height:27.2px;background:rgba(128,128,128,0.2);"></div>
<div class="t" style="top:587.12px;font-size:12px;line-height:15.6px;color:#222;transform:scaleX(0.8199);transform-origin:0 50%;left:473.91px;">SEB</div>
<svg style="left:510.75px;top:591.42px;" width="10.5" height="6.5" viewBox="0 0 10.5 6.5"><path d="M0.700 0.700l4.550 4.600 4.550-4.600" fill="none" stroke="#3a3a3a" stroke-width="2"/></svg>
<div style="left:540.0px;top:579.8199999999999px;width:77.8px;height:27.2px;background:rgba(255,255,255,0.45);border:1.200px solid #d4d4d4;"></div>
<div class="t" style="top:587.12px;font-size:12px;line-height:15.6px;color:#7c7c7c;transform:scaleX(1.0626);transform-origin:0 50%;left:546.75px;">__1,00</div>
<div class="t" style="top:587.12px;font-size:12px;line-height:15.6px;color:#4b7fd1;transform:scaleX(1.0085);transform-origin:0 50%;left:751.88px;text-decoration:underline;">R[25973] Q1&nbsp;</div>
<div class="t" style="top:587.12px;font-size:12px;line-height:15.6px;color:#222;transform:scaleX(0.9519);transform-origin:0 50%;left:864.19px;">0,81 €</div>
<div class="t" style="top:587.12px;font-size:12px;line-height:15.6px;color:#222;transform:scaleX(0.95);transform-origin:0 50%;left:981.38px;">0</div>
<div class="t" style="top:587.12px;font-size:12px;line-height:15.6px;color:#222;transform:scaleX(0.9422);transform-origin:0 50%;left:1098.38px;">1,00</div>
<div class="t" style="top:587.12px;font-size:12px;line-height:15.6px;color:#222;transform:scaleX(0.95);transform-origin:0 50%;left:1216.5px;">0</div>
<div style="left:79.6px;top:614.16px;width:1581.9px;height:38.14px;background:#fbe0c1;"></div>
<div style="left:79.6px;top:651.1999999999999px;width:1581.9px;height:1.2px;background:#eadccd;"></div>
<div style="left:92.62px;top:626.56px;width:13.5px;height:12.5px;background:#f4a32a;border-radius:2px;"></div>
<svg style="left:94.62px;top:629.06px;" width="10" height="8" viewBox="0 0 10 8"><path d="M1 4l2.800 2.800L9 1.200" fill="none" stroke="#fff" stroke-width="1.800"/></svg>
<div class="t" style="top:625.26px;font-size:12px;line-height:15.6px;color:#4b7fd1;transform:scaleX(0.9499);transform-origin:0 50%;left:135.94px;text-decoration:underline;">CS-10000498</div>
<div class="t" style="top:625.26px;font-size:12px;line-height:15.6px;color:#222;transform:scaleX(0.9868);transform-origin:0 50%;left:232.5px;">Cordon/...</div>
<div class="t" style="top:625.26px;font-size:12px;line-height:15.6px;color:#222;transform:scaleX(0.9226);transform-origin:0 50%;left:350.16px;">Groupe SEB</div>
<div style="left:467.34px;top:617.9599999999999px;width:62.2px;height:27.2px;background:rgba(128,128,128,0.2);"></div>
<div class="t" style="top:625.26px;font-size:12px;line-height:15.6px;color:#222;transform:scaleX(0.8199);transform-origin:0 50%;left:473.91px;">SEB</div>
<svg style="left:510.75px;top:629.56px;" width="10.5" height="6.5" viewBox="0 0 10.5 6.5"><path d="M0.700 0.700l4.550 4.600 4.550-4.600" fill="none" stroke="#3a3a3a" stroke-width="2"/></svg>
<div style="left:540.0px;top:617.9599999999999px;width:77.8px;height:27.2px;background:rgba(255,255,255,0.45);border:1.200px solid #d4d4d4;"></div>
<div class="t" style="top:625.26px;font-size:12px;line-height:15.6px;color:#7c7c7c;transform:scaleX(1.0626);transform-origin:0 50%;left:546.75px;">__1,00</div>
<div class="t" style="top:625.26px;font-size:12px;line-height:15.6px;color:#4b7fd1;transform:scaleX(1.0085);transform-origin:0 50%;left:751.88px;text-decoration:underline;">R[25973] Q1&nbsp;</div>
<div class="t" style="top:625.26px;font-size:12px;line-height:15.6px;color:#222;transform:scaleX(0.9519);transform-origin:0 50%;left:864.19px;">5,73 €</div>
<div class="t" style="top:625.26px;font-size:12px;line-height:15.6px;color:#222;transform:scaleX(0.95);transform-origin:0 50%;left:981.38px;">0</div>
<div class="t" style="top:625.26px;font-size:12px;line-height:15.6px;color:#222;transform:scaleX(0.9422);transform-origin:0 50%;left:1098.38px;">1,00</div>
<div class="t" style="top:625.26px;font-size:12px;line-height:15.6px;color:#222;transform:scaleX(0.95);transform-origin:0 50%;left:1216.5px;">0</div>
<div style="left:79.6px;top:689.14px;width:1581.9px;height:1.6px;background:#e0e0e0;"></div>
<div style="left:92.62px;top:664.6999999999999px;width:13.5px;height:12.7px;background:#fff;border:2.100px solid #6a6a6a;border-radius:2px;"></div>
<div class="t" style="top:663.4px;font-size:12px;line-height:15.6px;color:#4b7fd1;transform:scaleX(0.9793);transform-origin:0 50%;left:135.94px;text-decoration:underline;">MS-624825</div>
<div class="t" style="top:663.4px;font-size:12px;line-height:15.6px;color:#222;transform:scaleX(1.0285);transform-origin:0 50%;left:232.5px;">Diffuseur/complet</div>
<div class="t" style="top:663.4px;font-size:12px;line-height:15.6px;color:#222;transform:scaleX(0.9226);transform-origin:0 50%;left:350.16px;">Groupe SEB</div>
<div style="left:467.34px;top:656.0999999999999px;width:62.2px;height:27.2px;background:#e6e6e6;"></div>
<div class="t" style="top:663.4px;font-size:12px;line-height:15.6px;color:#222;transform:scaleX(0.8199);transform-origin:0 50%;left:473.91px;">SEB</div>
<svg style="left:510.75px;top:667.6999999999999px;" width="10.5" height="6.5" viewBox="0 0 10.5 6.5"><path d="M0.700 0.700l4.550 4.600 4.550-4.600" fill="none" stroke="#3a3a3a" stroke-width="2"/></svg>
<div style="left:540.0px;top:656.0999999999999px;width:77.8px;height:27.2px;background:#fff;border:1.200px solid #d4d4d4;"></div>
<div class="t" style="top:663.4px;font-size:12px;line-height:15.6px;color:#7c7c7c;transform:scaleX(1.0626);transform-origin:0 50%;left:546.75px;">__1,00</div>
<div class="t" style="top:663.4px;font-size:12px;line-height:15.6px;color:#4b7fd1;transform:scaleX(1.0085);transform-origin:0 50%;left:751.88px;text-decoration:underline;">R[24495] Q1&nbsp;</div>
<div class="t" style="top:663.4px;font-size:12px;line-height:15.6px;color:#222;transform:scaleX(0.9549);transform-origin:0 50%;left:864.19px;">10,57 €</div>
<div class="t" style="top:663.4px;font-size:12px;line-height:15.6px;color:#222;transform:scaleX(0.9422);transform-origin:0 50%;left:981.38px;">1,00</div>
<div class="t" style="top:663.4px;font-size:12px;line-height:15.6px;color:#222;transform:scaleX(0.9422);transform-origin:0 50%;left:1098.38px;">5,00</div>
<div class="t" style="top:663.4px;font-size:12px;line-height:15.6px;color:#222;transform:scaleX(0.9422);transform-origin:0 50%;left:1216.5px;">2,00</div>
<div style="left:79.6px;top:727.2800000000001px;width:1581.9px;height:1.6px;background:#e0e0e0;"></div>
<div style="left:92.62px;top:702.84px;width:13.5px;height:12.7px;background:#fff;border:2.100px solid #6a6a6a;border-radius:2px;"></div>
<div class="t" style="top:701.54px;font-size:12px;line-height:15.6px;color:#4b7fd1;transform:scaleX(0.9793);transform-origin:0 50%;left:135.94px;text-decoration:underline;">MS-624825</div>
<div class="t" style="top:701.54px;font-size:12px;line-height:15.6px;color:#222;transform:scaleX(1.0285);transform-origin:0 50%;left:232.5px;">Diffuseur/complet</div>
<div class="t" style="top:701.54px;font-size:12px;line-height:15.6px;color:#222;transform:scaleX(0.9226);transform-origin:0 50%;left:350.16px;">Groupe SEB</div>
<div style="left:467.34px;top:694.24px;width:62.2px;height:27.2px;background:#e6e6e6;"></div>
<div class="t" style="top:701.54px;font-size:12px;line-height:15.6px;color:#222;transform:scaleX(0.8199);transform-origin:0 50%;left:473.91px;">SEB</div>
<svg style="left:510.75px;top:705.84px;" width="10.5" height="6.5" viewBox="0 0 10.5 6.5"><path d="M0.700 0.700l4.550 4.600 4.550-4.600" fill="none" stroke="#3a3a3a" stroke-width="2"/></svg>
<div style="left:540.0px;top:694.24px;width:77.8px;height:27.2px;background:#fff;border:1.200px solid #d4d4d4;"></div>
<div class="t" style="top:701.54px;font-size:12px;line-height:15.6px;color:#7c7c7c;transform:scaleX(1.0626);transform-origin:0 50%;left:546.75px;">__1,00</div>
<div class="t" style="top:701.54px;font-size:12px;line-height:15.6px;color:#4b7fd1;transform:scaleX(1.0085);transform-origin:0 50%;left:751.88px;text-decoration:underline;">R[25740] Q1&nbsp;</div>
<div class="t" style="top:701.54px;font-size:12px;line-height:15.6px;color:#222;transform:scaleX(0.9549);transform-origin:0 50%;left:864.19px;">10,57 €</div>
<div class="t" style="top:701.54px;font-size:12px;line-height:15.6px;color:#222;transform:scaleX(0.9422);transform-origin:0 50%;left:981.38px;">1,00</div>
<div class="t" style="top:701.54px;font-size:12px;line-height:15.6px;color:#222;transform:scaleX(0.9422);transform-origin:0 50%;left:1098.38px;">5,00</div>
<div class="t" style="top:701.54px;font-size:12px;line-height:15.6px;color:#222;transform:scaleX(0.9422);transform-origin:0 50%;left:1216.5px;">2,00</div>
<div style="left:79.6px;top:765.42px;width:1581.9px;height:1.6px;background:#e0e0e0;"></div>
<div style="left:92.62px;top:740.9799999999999px;width:13.5px;height:12.7px;background:#fff;border:2.100px solid #6a6a6a;border-radius:2px;"></div>
<div class="t" style="top:739.68px;font-size:12px;line-height:15.6px;color:#4b7fd1;transform:scaleX(0.9793);transform-origin:0 50%;left:135.94px;text-decoration:underline;">MS-624839</div>
<div class="t" style="top:739.68px;font-size:12px;line-height:15.6px;color:#222;transform:scaleX(0.9317);transform-origin:0 50%;left:232.5px;">Resistance</div>
<div class="t" style="top:739.68px;font-size:12px;line-height:15.6px;color:#222;transform:scaleX(0.9226);transform-origin:0 50%;left:350.16px;">Groupe SEB</div>
<div style="left:467.34px;top:732.3799999999999px;width:62.2px;height:27.2px;background:#e6e6e6;"></div>
<div class="t" style="top:739.68px;font-size:12px;line-height:15.6px;color:#222;transform:scaleX(0.8199);transform-origin:0 50%;left:473.91px;">SEB</div>
<svg style="left:510.75px;top:743.9799999999999px;" width="10.5" height="6.5" viewBox="0 0 10.5 6.5"><path d="M0.700 0.700l4.550 4.600 4.550-4.600" fill="none" stroke="#3a3a3a" stroke-width="2"/></svg>
<div style="left:540.0px;top:732.3799999999999px;width:77.8px;height:27.2px;background:#fff;border:1.200px solid #d4d4d4;"></div>
<div class="t" style="top:739.68px;font-size:12px;line-height:15.6px;color:#7c7c7c;transform:scaleX(1.0626);transform-origin:0 50%;left:546.75px;">__1,00</div>
<div class="t" style="top:739.68px;font-size:12px;line-height:15.6px;color:#4b7fd1;transform:scaleX(1.0085);transform-origin:0 50%;left:751.88px;text-decoration:underline;">R[25185] Q1&nbsp;</div>
<div class="t" style="top:739.68px;font-size:12px;line-height:15.6px;color:#222;transform:scaleX(0.9519);transform-origin:0 50%;left:864.19px;">5,73 €</div>
<div class="t" style="top:739.68px;font-size:12px;line-height:15.6px;color:#222;transform:scaleX(0.95);transform-origin:0 50%;left:981.38px;">0</div>
<div class="t" style="top:739.68px;font-size:12px;line-height:15.6px;color:#222;transform:scaleX(0.9422);transform-origin:0 50%;left:1098.38px;">1,00</div>
<div class="t" style="top:739.68px;font-size:12px;line-height:15.6px;color:#222;transform:scaleX(0.95);transform-origin:0 50%;left:1216.5px;">0</div>
<div style="left:79.6px;top:803.5600000000001px;width:1581.9px;height:1.6px;background:#e0e0e0;"></div>
<div style="left:92.62px;top:779.12px;width:13.5px;height:12.7px;background:#fff;border:2.100px solid #6a6a6a;border-radius:2px;"></div>
<div class="t" style="top:777.82px;font-size:12px;line-height:15.6px;color:#4b7fd1;transform:scaleX(0.9793);transform-origin:0 50%;left:135.94px;text-decoration:underline;">MS-624840</div>
<div class="t" style="top:777.82px;font-size:12px;line-height:15.6px;color:#222;transform:scaleX(1.0041);transform-origin:0 50%;left:232.5px;">Cordon</div>
<div class="t" style="top:777.82px;font-size:12px;line-height:15.6px;color:#222;transform:scaleX(0.9226);transform-origin:0 50%;left:350.16px;">Groupe SEB</div>
<div style="left:467.34px;top:770.52px;width:62.2px;height:27.2px;background:#e6e6e6;"></div>
<div class="t" style="top:777.82px;font-size:12px;line-height:15.6px;color:#222;transform:scaleX(0.8199);transform-origin:0 50%;left:473.91px;">SEB</div>
<svg style="left:510.75px;top:782.12px;" width="10.5" height="6.5" viewBox="0 0 10.5 6.5"><path d="M0.700 0.700l4.550 4.600 4.550-4.600" fill="none" stroke="#3a3a3a" stroke-width="2"/></svg>
<div style="left:540.0px;top:770.52px;width:77.8px;height:27.2px;background:#fff;border:1.200px solid #d4d4d4;"></div>
<div class="t" style="top:777.82px;font-size:12px;line-height:15.6px;color:#7c7c7c;transform:scaleX(1.0626);transform-origin:0 50%;left:546.75px;">__1,00</div>
<div class="t" style="top:777.82px;font-size:12px;line-height:15.6px;color:#4b7fd1;transform:scaleX(1.0085);transform-origin:0 50%;left:751.88px;text-decoration:underline;">R[25205] Q1&nbsp;</div>
<div class="t" style="top:777.82px;font-size:12px;line-height:15.6px;color:#222;transform:scaleX(0.9519);transform-origin:0 50%;left:864.19px;">3,19 €</div>
<div class="t" style="top:777.82px;font-size:12px;line-height:15.6px;color:#222;transform:scaleX(0.9422);transform-origin:0 50%;left:981.38px;">1,00</div>
<div class="t" style="top:777.82px;font-size:12px;line-height:15.6px;color:#222;transform:scaleX(0.9422);transform-origin:0 50%;left:1098.38px;">2,00</div>
<div class="t" style="top:777.82px;font-size:12px;line-height:15.6px;color:#222;transform:scaleX(0.95);transform-origin:0 50%;left:1216.5px;">0</div>
<div style="left:79.6px;top:841.7px;width:1581.9px;height:1.6px;background:#e0e0e0;"></div>
<div style="left:92.62px;top:817.26px;width:13.5px;height:12.7px;background:#fff;border:2.100px solid #6a6a6a;border-radius:2px;"></div>
<div class="t" style="top:815.96px;font-size:12px;line-height:15.6px;color:#4b7fd1;transform:scaleX(0.9386);transform-origin:0 50%;left:135.94px;text-decoration:underline;">SS-208719</div>
<div class="t" style="top:815.96px;font-size:12px;line-height:15.6px;color:#222;transform:scaleX(0.9707);transform-origin:0 50%;left:232.5px;">Verseuse+Couvercle</div>
<div class="t" style="top:815.96px;font-size:12px;line-height:15.6px;color:#222;transform:scaleX(0.9226);transform-origin:0 50%;left:350.16px;">Groupe SEB</div>
<div style="left:467.34px;top:808.66px;width:62.2px;height:27.2px;background:#e6e6e6;"></div>
<div class="t" style="top:815.96px;font-size:12px;line-height:15.6px;color:#222;transform:scaleX(0.8199);transform-origin:0 50%;left:473.91px;">SEB</div>
<svg style="left:510.75px;top:820.26px;" width="10.5" height="6.5" viewBox="0 0 10.5 6.5"><path d="M0.700 0.700l4.550 4.600 4.550-4.600" fill="none" stroke="#3a3a3a" stroke-width="2"/></svg>
<div style="left:540.0px;top:808.66px;width:77.8px;height:27.2px;background:#fff;border:1.200px solid #d4d4d4;"></div>
<div class="t" style="top:815.96px;font-size:12px;line-height:15.6px;color:#7c7c7c;transform:scaleX(1.0626);transform-origin:0 50%;left:546.75px;">__1,00</div>
<div class="t" style="top:815.96px;font-size:12px;line-height:15.6px;color:#4b7fd1;transform:scaleX(1.0085);transform-origin:0 50%;left:751.88px;text-decoration:underline;">R[25958] Q1&nbsp;</div>
<div class="t" style="top:815.96px;font-size:12px;line-height:15.6px;color:#222;transform:scaleX(0.9519);transform-origin:0 50%;left:864.19px;">7,01 €</div>
<div class="t" style="top:815.96px;font-size:12px;line-height:15.6px;color:#222;transform:scaleX(0.95);transform-origin:0 50%;left:981.38px;">0</div>
<div class="t" style="top:815.96px;font-size:12px;line-height:15.6px;color:#222;transform:scaleX(0.9422);transform-origin:0 50%;left:1098.38px;">1,00</div>
<div class="t" style="top:815.96px;font-size:12px;line-height:15.6px;color:#222;transform:scaleX(0.95);transform-origin:0 50%;left:1216.5px;">0</div>
<div style="left:79.6px;top:879.84px;width:1581.9px;height:1.6px;background:#e0e0e0;"></div>
<div style="left:92.62px;top:855.4px;width:13.5px;height:12.7px;background:#fff;border:2.100px solid #6a6a6a;border-radius:2px;"></div>
<div class="t" style="top:854.1px;font-size:12px;line-height:15.6px;color:#4b7fd1;transform:scaleX(0.9494);transform-origin:0 50%;left:135.94px;text-decoration:underline;">FS-9100038172</div>
<div class="t" style="top:854.1px;font-size:12px;line-height:15.6px;color:#222;transform:scaleX(0.9904);transform-origin:0 50%;left:232.5px;">Support/fer a...</div>
<div class="t" style="top:854.1px;font-size:12px;line-height:15.6px;color:#222;transform:scaleX(0.9226);transform-origin:0 50%;left:350.16px;">Groupe SEB</div>
<div style="left:467.34px;top:846.8px;width:62.2px;height:27.2px;background:#e6e6e6;"></div>
<div class="t" style="top:854.1px;font-size:12px;line-height:15.6px;color:#222;transform:scaleX(0.8199);transform-origin:0 50%;left:473.91px;">SEB</div>
<svg style="left:510.75px;top:858.4px;" width="10.5" height="6.5" viewBox="0 0 10.5 6.5"><path d="M0.700 0.700l4.550 4.600 4.550-4.600" fill="none" stroke="#3a3a3a" stroke-width="2"/></svg>
<div style="left:540.0px;top:846.8px;width:77.8px;height:27.2px;background:#fff;border:1.200px solid #d4d4d4;"></div>
<div class="t" style="top:854.1px;font-size:12px;line-height:15.6px;color:#7c7c7c;transform:scaleX(1.0626);transform-origin:0 50%;left:546.75px;">__1,00</div>
<div class="t" style="top:854.1px;font-size:12px;line-height:15.6px;color:#4b7fd1;transform:scaleX(1.0085);transform-origin:0 50%;left:751.88px;text-decoration:underline;">R[25963] Q1&nbsp;</div>
<div class="t" style="top:854.1px;font-size:12px;line-height:15.6px;color:#222;transform:scaleX(0.9519);transform-origin:0 50%;left:864.19px;">7,01 €</div>
<div class="t" style="top:854.1px;font-size:12px;line-height:15.6px;color:#222;transform:scaleX(0.95);transform-origin:0 50%;left:981.38px;">0</div>
<div class="t" style="top:854.1px;font-size:12px;line-height:15.6px;color:#222;transform:scaleX(0.9422);transform-origin:0 50%;left:1098.38px;">1,00</div>
<div class="t" style="top:854.1px;font-size:12px;line-height:15.6px;color:#222;transform:scaleX(0.95);transform-origin:0 50%;left:1216.5px;">0</div>
<div style="left:79.6px;top:917.98px;width:1581.9px;height:1.6px;background:#e0e0e0;"></div>
<div style="left:92.62px;top:893.54px;width:13.5px;height:12.7px;background:#fff;border:2.100px solid #6a6a6a;border-radius:2px;"></div>
<div class="t" style="top:892.24px;font-size:12px;line-height:15.6px;color:#4b7fd1;transform:scaleX(0.9386);transform-origin:0 50%;left:135.94px;text-decoration:underline;">SS-203674</div>
<div class="t" style="top:892.24px;font-size:12px;line-height:15.6px;color:#222;transform:scaleX(0.9656);transform-origin:0 50%;left:232.5px;">Couvercle</div>
<div class="t" style="top:892.24px;font-size:12px;line-height:15.6px;color:#222;transform:scaleX(0.9226);transform-origin:0 50%;left:350.16px;">Groupe SEB</div>
<div style="left:467.34px;top:884.9399999999999px;width:62.2px;height:27.2px;background:#e6e6e6;"></div>
<div class="t" style="top:892.24px;font-size:12px;line-height:15.6px;color:#222;transform:scaleX(0.8199);transform-origin:0 50%;left:473.91px;">SEB</div>
<svg style="left:510.75px;top:896.54px;" width="10.5" height="6.5" viewBox="0 0 10.5 6.5"><path d="M0.700 0.700l4.550 4.600 4.550-4.600" fill="none" stroke="#3a3a3a" stroke-width="2"/></svg>
<div style="left:540.0px;top:884.9399999999999px;width:77.8px;height:27.2px;background:#fff;border:1.200px solid #d4d4d4;"></div>
<div class="t" style="top:892.24px;font-size:12px;line-height:15.6px;color:#7c7c7c;transform:scaleX(1.0626);transform-origin:0 50%;left:546.75px;">__1,00</div>
<div class="t" style="top:892.24px;font-size:12px;line-height:15.6px;color:#4b7fd1;transform:scaleX(1.0085);transform-origin:0 50%;left:751.88px;text-decoration:underline;">R[25920] Q1&nbsp;</div>
<div class="t" style="top:892.24px;font-size:12px;line-height:15.6px;color:#222;transform:scaleX(0.9519);transform-origin:0 50%;left:864.19px;">5,73 €</div>
<div class="t" style="top:892.24px;font-size:12px;line-height:15.6px;color:#222;transform:scaleX(0.95);transform-origin:0 50%;left:981.38px;">0</div>
<div class="t" style="top:892.24px;font-size:12px;line-height:15.6px;color:#222;transform:scaleX(0.9422);transform-origin:0 50%;left:1098.38px;">1,00</div>
<div class="t" style="top:892.24px;font-size:12px;line-height:15.6px;color:#222;transform:scaleX(0.95);transform-origin:0 50%;left:1216.5px;">0</div>
<div style="left:79.6px;top:956.12px;width:1581.9px;height:1.6px;background:#e0e0e0;"></div>
<div style="left:92.62px;top:931.68px;width:13.5px;height:12.7px;background:#fff;border:2.100px solid #6a6a6a;border-radius:2px;"></div>
<div class="t" style="top:930.38px;font-size:12px;line-height:15.6px;color:#4b7fd1;transform:scaleX(0.948);transform-origin:0 50%;left:135.94px;text-decoration:underline;">SS-7223035244</div>
<div class="t" style="top:930.38px;font-size:12px;line-height:15.6px;color:#222;transform:scaleX(1.0074);transform-origin:0 50%;left:232.5px;">Tube/telescopique</div>
<div class="t" style="top:930.38px;font-size:12px;line-height:15.6px;color:#222;transform:scaleX(0.9226);transform-origin:0 50%;left:350.16px;">Groupe SEB</div>
<div style="left:467.34px;top:923.0799999999999px;width:62.2px;height:27.2px;background:#e6e6e6;"></div>
<div class="t" style="top:930.38px;font-size:12px;line-height:15.6px;color:#222;transform:scaleX(0.8199);transform-origin:0 50%;left:473.91px;">SEB</div>
<svg style="left:510.75px;top:934.68px;" width="10.5" height="6.5" viewBox="0 0 10.5 6.5"><path d="M0.700 0.700l4.550 4.600 4.550-4.600" fill="none" stroke="#3a3a3a" stroke-width="2"/></svg>
<div style="left:540.0px;top:923.0799999999999px;width:77.8px;height:27.2px;background:#fff;border:1.200px solid #d4d4d4;"></div>
<div class="t" style="top:930.38px;font-size:12px;line-height:15.6px;color:#7c7c7c;transform:scaleX(1.0626);transform-origin:0 50%;left:546.75px;">__1,00</div>
<div class="t" style="top:930.38px;font-size:12px;line-height:15.6px;color:#4b7fd1;transform:scaleX(1.0085);transform-origin:0 50%;left:751.88px;text-decoration:underline;">R[25932] Q1&nbsp;</div>
<div class="t" style="top:930.38px;font-size:12px;line-height:15.6px;color:#222;transform:scaleX(0.9519);transform-origin:0 50%;left:864.19px;">3,19 €</div>
<div class="t" style="top:930.38px;font-size:12px;line-height:15.6px;color:#222;transform:scaleX(0.9422);transform-origin:0 50%;left:981.38px;">3,00</div>
<div class="t" style="top:930.38px;font-size:12px;line-height:15.6px;color:#222;transform:scaleX(0.9422);transform-origin:0 50%;left:1098.38px;">6,00</div>
<div class="t" style="top:930.38px;font-size:12px;line-height:15.6px;color:#222;transform:scaleX(0.9422);transform-origin:0 50%;left:1216.5px;">2,00</div>
<div style="left:79.6px;top:994.26px;width:1581.9px;height:1.6px;background:#e0e0e0;"></div>
<div style="left:92.62px;top:969.8199999999999px;width:13.5px;height:12.7px;background:#fff;border:2.100px solid #6a6a6a;border-radius:2px;"></div>
<div class="t" style="top:968.52px;font-size:12px;line-height:15.6px;color:#4b7fd1;transform:scaleX(0.948);transform-origin:0 50%;left:135.94px;text-decoration:underline;">SS-7223035244</div>
<div class="t" style="top:968.52px;font-size:12px;line-height:15.6px;color:#222;transform:scaleX(1.0074);transform-origin:0 50%;left:232.5px;">Tube/telescopique</div>
<div class="t" style="top:968.52px;font-size:12px;line-height:15.6px;color:#222;transform:scaleX(0.9226);transform-origin:0 50%;left:350.16px;">Groupe SEB</div>
<div style="left:467.34px;top:961.2199999999999px;width:62.2px;height:27.2px;background:#e6e6e6;"></div>
<div class="t" style="top:968.52px;font-size:12px;line-height:15.6px;color:#222;transform:scaleX(0.8199);transform-origin:0 50%;left:473.91px;">SEB</div>
<svg style="left:510.75px;top:972.8199999999999px;" width="10.5" height="6.5" viewBox="0 0 10.5 6.5"><path d="M0.700 0.700l4.550 4.600 4.550-4.600" fill="none" stroke="#3a3a3a" stroke-width="2"/></svg>
<div style="left:540.0px;top:961.2199999999999px;width:77.8px;height:27.2px;background:#fff;border:1.200px solid #d4d4d4;"></div>
<div class="t" style="top:968.52px;font-size:12px;line-height:15.6px;color:#7c7c7c;transform:scaleX(1.0626);transform-origin:0 50%;left:546.75px;">__1,00</div>
<div class="t" style="top:968.52px;font-size:12px;line-height:15.6px;color:#4b7fd1;transform:scaleX(1.0085);transform-origin:0 50%;left:751.88px;text-decoration:underline;">R[25632] Q1&nbsp;</div>
<div class="t" style="top:968.52px;font-size:12px;line-height:15.6px;color:#222;transform:scaleX(0.9519);transform-origin:0 50%;left:864.19px;">3,19 €</div>
<div class="t" style="top:968.52px;font-size:12px;line-height:15.6px;color:#222;transform:scaleX(0.9422);transform-origin:0 50%;left:981.38px;">3,00</div>
<div class="t" style="top:968.52px;font-size:12px;line-height:15.6px;color:#222;transform:scaleX(0.9422);transform-origin:0 50%;left:1098.38px;">6,00</div>
<div class="t" style="top:968.52px;font-size:12px;line-height:15.6px;color:#222;transform:scaleX(0.9422);transform-origin:0 50%;left:1216.5px;">2,00</div>
<div style="left:78.6px;top:271.8px;width:1599.4px;height:3.2px;background:#2f4d75;"></div>
<div style="left:80.81px;top:576.56px;width:41.44px;height:73.88px;border:6.3px solid #fe0000;"></div>
<div style="left:1661.5px;top:274.7px;width:16.5px;height:701px;background:#f0f0f0;"></div>
<svg style="left:1665.5px;top:278px;" width="9.5" height="6" viewBox="0 0 9.5 6"><path d="M0.700 5.300L4.750 1l4.050 4.300" fill="none" stroke="#555" stroke-width="1.500"/></svg>
<svg style="left:1665.5px;top:966px;" width="9.5" height="6" viewBox="0 0 9.5 6"><path d="M0.700 0.700L4.750 5l4.050-4.300" fill="none" stroke="#555" stroke-width="1.500"/></svg>
<div style="left:1665.0px;top:303.5px;width:8.5px;height:41px;background:#a3abb9;border-radius:4px;"></div>
<div style="left:1678px;top:180px;width:242px;height:795px;background:#1b2b42;"></div>
<div style="left:1678px;top:180px;width:242px;height:39.5px;background:#2b77a4;border-radius:5px 0 0 0;"></div>
<svg style="left:1686.75px;top:195px;" width="11" height="12" viewBox="0 0 11 12"><path d="M1 1l4.500 5-4.500 5M5.500 1l4.500 5-4.500 5" fill="none" stroke="#dfe9f2" stroke-width="1.500"/></svg>
<div class="t h" style="top:191.25px;font-size:15px;line-height:19.5px;color:#fff;font-weight:700;transform:scaleX(0.8427);transform-origin:0 50%;left:1704.19px;">Rechercher</div>
<svg style="left:1872.19px;top:192px;" width="17" height="16" viewBox="0 0 17 16"><g stroke="#fff" stroke-width="1.400" fill="none"><path d="M0.500 3h15.500M0.500 8h15.500M0.500 13h15.500"/><path d="M12.500 0.800v4.400M5 5.800v4.400M11 10.800v4.400" stroke-width="2"/></g></svg>
<svg style="left:1899.19px;top:193px;" width="15" height="15" viewBox="0 0 15 15"><g stroke="#fff" stroke-width="1.200" fill="none" stroke-linejoin="round"><path d="M9.500 1l4.500 4.500-1.200 1.200-1-.3-3 3 .3 2.300-1.300 1.300-5.300-5.300 1.300-1.300 2.300.300 3-3-.3-1z"/><path d="M4.500 10.500L0.800 14.200"/></g></svg>
<svg style="left:1734.75px;top:233px;" width="9" height="12" viewBox="0 0 9 12"><path d="M1 1.500l7.500 4.500-7.500 4.500" fill="none" stroke="#fff" stroke-width="1.700"/></svg>
<div class="t h" style="top:231.2px;font-size:12px;line-height:15.6px;color:#fff;font-weight:700;transform:scaleX(0.945);transform-origin:0 50%;left:1751.25px;">Ouvrir toutes les catégories</div>
<div style="left:1694.53px;top:255px;width:211.59px;height:29px;background:#3a5577;border-radius:6px;"></div>
<div class="t h" style="top:263.8px;font-size:12px;line-height:15.6px;color:#fff;font-weight:700;transform:scaleX(0.9605);transform-origin:0 50%;left:1705.78px;">Bon de commande</div>
<svg style="left:1888.12px;top:266.5px;" width="12" height="7.5" viewBox="0 0 12 7.5"><path d="M1 6.500l5-5 5 5" fill="none" stroke="#fff" stroke-width="2"/></svg>
<div style="left:1699.22px;top:295.0px;width:200.62px;height:34px;background:#fff;border-radius:6px 6px 0 0;"></div>
<div class="t h" style="top:297.85px;font-size:9.5px;line-height:12.3px;color:#777;transform:scaleX(0.9226);transform-origin:0 50%;left:1714.31px;">Type d'article</div>
<div class="t" style="top:309.4px;font-size:12px;line-height:15.6px;color:#1a1a1a;transform:scaleX(0.946);transform-origin:0 50%;left:1714.31px;">Pièces détachées</div>
<svg style="left:1886.94px;top:315.5px;" width="8" height="4.5" viewBox="0 0 8 4.5"><path d="M0 0h8L4 4.500z" fill="#9aa4b2"/></svg>
<div style="left:1699.22px;top:335.15px;width:200.62px;height:34px;background:#fff;border-radius:6px 6px 0 0;"></div>
<div class="t h" style="top:338.0px;font-size:9.5px;line-height:12.3px;color:#777;transform:scaleX(0.882);transform-origin:0 50%;left:1714.31px;">Fournisseur</div>
<div class="t" style="top:349.55px;font-size:12px;line-height:15.6px;color:#1a1a1a;transform:scaleX(0.7807);transform-origin:0 50%;left:1714.31px;">SEB</div>
<svg style="left:1886.94px;top:355.65px;" width="8" height="4.5" viewBox="0 0 8 4.5"><path d="M0 0h8L4 4.500z" fill="#9aa4b2"/></svg>
<div style="left:1700.6200000000001px;top:376.3px;width:200.62px;height:34px;background:#fff;border-radius:6px 6px 0 0;"></div>
<div class="t" style="top:390.05px;font-size:13px;line-height:16.9px;color:#8a8a8a;transform:scaleX(0.9461);transform-origin:0 50%;left:1710.94px;">N° d'intervention</div>
<div style="left:1700.6200000000001px;top:416.45px;width:200.62px;height:34px;background:#fff;border-radius:6px 6px 0 0;"></div>
<div class="t" style="top:430.2px;font-size:13px;line-height:16.9px;color:#8a8a8a;transform:scaleX(0.9159);transform-origin:0 50%;left:1710.94px;">Contremarque</div>
<div style="left:1699.22px;top:455.6px;width:200.62px;height:34px;background:#fff;border-radius:6px 6px 0 0;"></div>
<div class="t h" style="top:458.45px;font-size:9.5px;line-height:12.3px;color:#777;transform:scaleX(0.9282);transform-origin:0 50%;left:1714.31px;">Avec réapprovisionnement</div>
<div class="t" style="top:470.0px;font-size:12px;line-height:15.6px;color:#1a1a1a;transform:scaleX(1.022);transform-origin:0 50%;left:1714.31px;">Non</div>
<svg style="left:1886.94px;top:476.1px;" width="8" height="4.5" viewBox="0 0 8 4.5"><path d="M0 0h8L4 4.500z" fill="#9aa4b2"/></svg>
<div style="left:1696.88px;top:933.28px;width:99.56px;height:34.69px;background:#3a5577;border-radius:6px;"></div>
<div class="t b h" style="top:943.84px;font-size:12.5px;line-height:16.2px;color:#fff;font-weight:700;transform:scaleX(1.0283);transform-origin:50% 50%;left:1446.75px;width:600px;text-align:center;"><span class="m">Effacer</span></div>
<div style="left:1801.88px;top:933.28px;width:100.31px;height:34.69px;background:#e07a00;border-radius:6px;"></div>
<div class="t b h" style="top:943.84px;font-size:12.5px;line-height:16.2px;color:#fff;font-weight:700;transform:scaleX(1.022);transform-origin:50% 50%;left:1552.31px;width:600px;text-align:center;"><span class="m">Rechercher</span></div>
</div>
</body></html>
